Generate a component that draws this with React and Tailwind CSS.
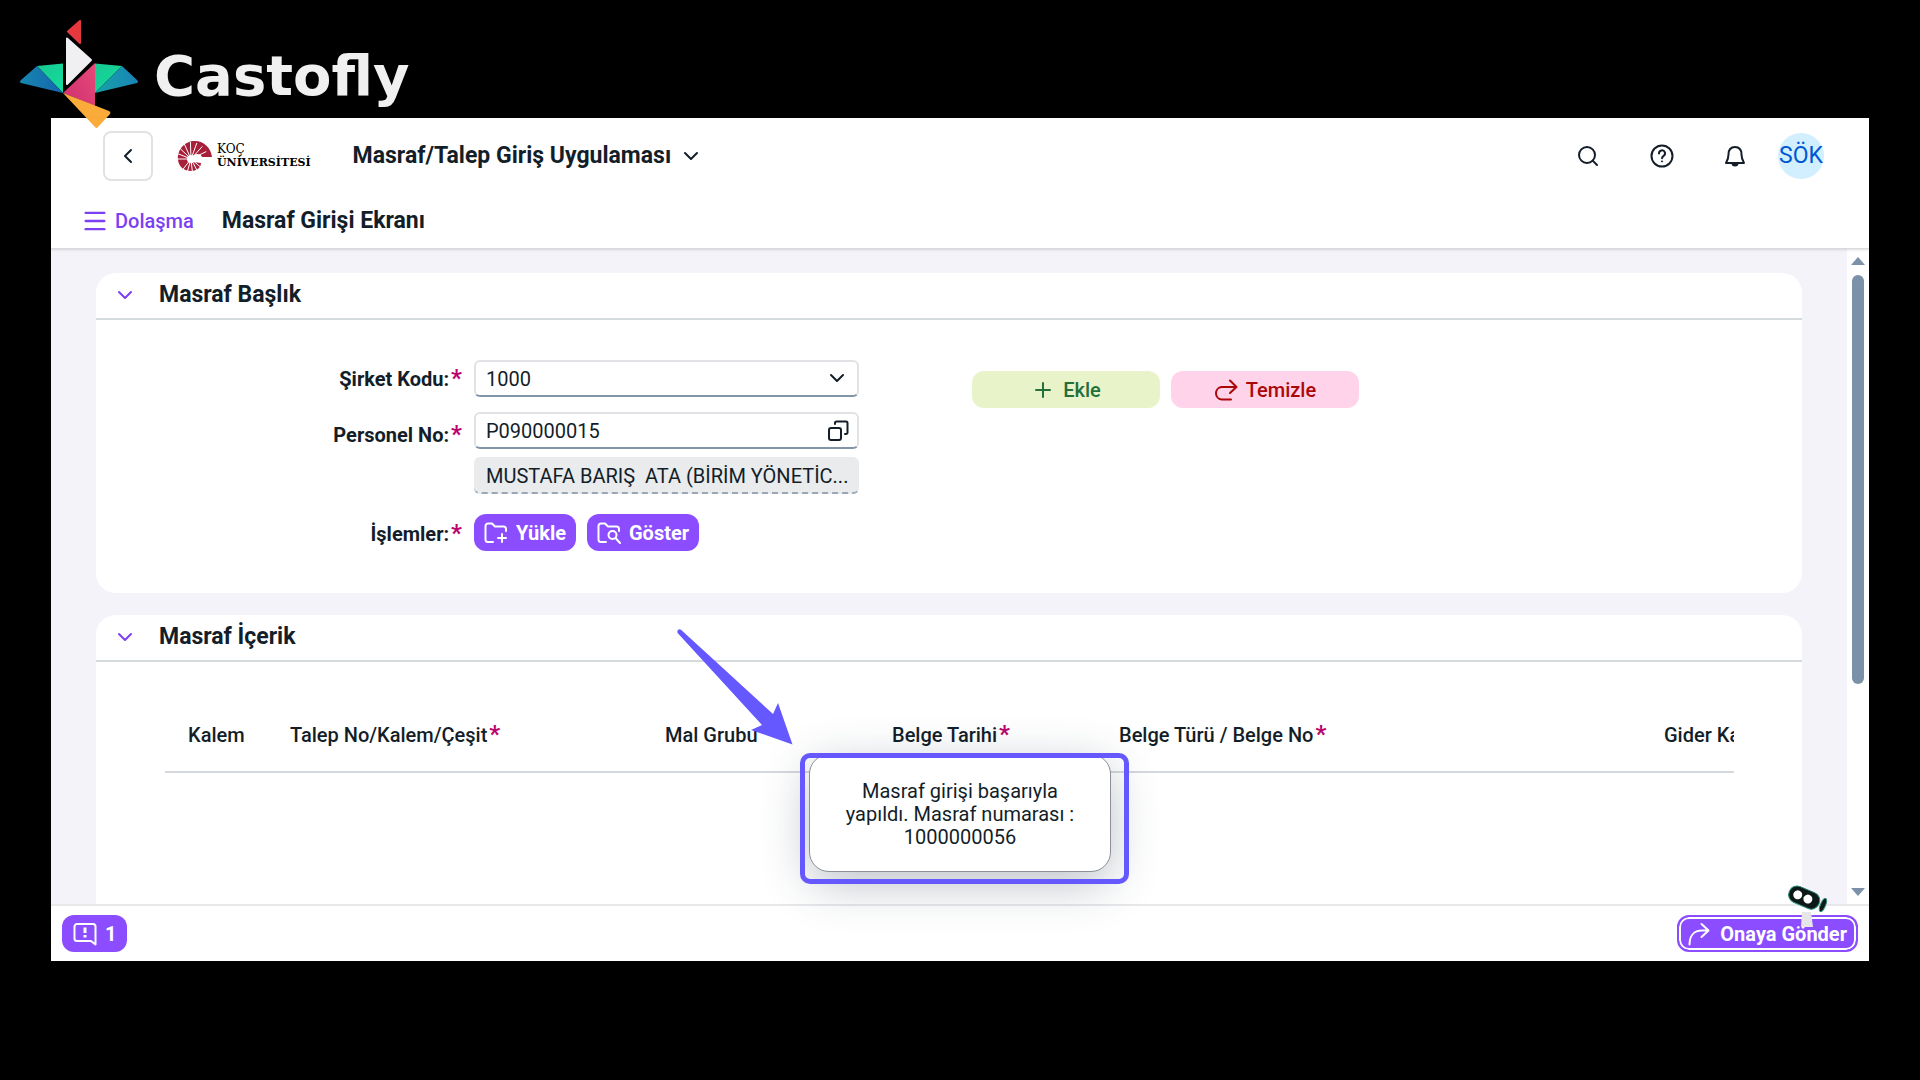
import { ChevronDown, ChevronLeft, Menu, Plus, Search } from 'lucide-react';

const columns = [
  { title: 'Kalem', className: 'w-[125px] pl-[23px]' },
  { title: 'Talep No/Kalem/Çeşit', required: true, className: 'w-[375px]' },
  { title: 'Mal Grubu', className: 'w-[227px]' },
  { title: 'Belge Tarihi', required: true, className: 'w-[227px]' },
  { title: 'Belge Türü / Belge No', required: true, className: '' },
  { title: 'Gider Ka', className: 'w-[70px]' },
];

const shellRays = Array.from({ length: 15 }, (_, i) => {
  const angle = (i * 22 * Math.PI) / 180;
  return { x: 14 - 17 * Math.cos(angle), y: 18 - 17 * Math.sin(angle) };
});

function CastoflyLogo() {
  return (
    <div className="absolute left-5 top-5 flex items-start">
      <svg viewBox="0 0 118 108" className="h-[108px] w-[118px]" aria-hidden="true">
        <defs>
          <linearGradient id="wingTop" x1="0" y1="0" x2="1" y2="1">
            <stop offset="0" stopColor="#17c98f" />
            <stop offset="1" stopColor="#15dca0" />
          </linearGradient>
          <linearGradient id="wingLow" x1="0" y1="0" x2="1" y2="0">
            <stop offset="0" stopColor="#1787b0" />
            <stop offset="1" stopColor="#1464ad" />
          </linearGradient>
          <linearGradient id="wingLowRight" x1="0" y1="0" x2="1" y2="0">
            <stop offset="0" stopColor="#16a3a6" />
            <stop offset="1" stopColor="#1983b8" />
          </linearGradient>
          <linearGradient id="chest" x1="1" y1="0" x2="0" y2="1">
            <stop offset="0" stopColor="#ea4a78" />
            <stop offset="1" stopColor="#cb2f70" />
          </linearGradient>
        </defs>
        <g strokeLinejoin="round" strokeWidth="2">
          <path d="M48 11.5 60 1v22z" fill="#e6393f" stroke="#e6393f" />
          <path d="M47 18.5v45.5l24-24z" fill="#f0f0f2" stroke="#f0f0f2" />
        </g>
        <path d="M17 46 43 43.5v29.5z" fill="url(#wingTop)" />
        <path d="M17 46 43 73 1 63Q-1 62 1 60z" fill="url(#wingLow)" />
        <path d="M75 43.5l27 2.5-27 27z" fill="url(#wingTop)" />
        <path d="M102 46l15 14q2 2 0 3L75 73z" fill="url(#wingLowRight)" />
        <path d="M75 43v43L43 73z" fill="url(#chest)" />
        <path d="M43 73 89 91q2 1 1 3L78 107q-2 2-3 0z" fill="#fbab3a" />
      </svg>
      <span className="ml-4 mt-6 font-['DejaVu_Sans'] text-[56px] font-bold leading-[64px] text-[#f0f0f0]">
        Castofly
      </span>
    </div>
  );
}

function UniversityLogo() {
  return (
    <a href="#home" className="ml-6 flex items-center gap-1 text-black">
      <svg viewBox="0 0 36 30" className="h-[30px] w-9" aria-hidden="true">
        <path
          d="M1 19C0 8 8 0 18 0c9 0 16 7 17 16H25c-1-3-5-4-8-2-3 3-2 6-1 7l8 1c0 5-5 8-10 8C7 30 2 26 1 19z"
          fill="#a81f3a"
        />
        <circle cx="14" cy="18" r="4" fill="#fff" />
        <g stroke="#fff" strokeWidth="1">
          {shellRays.map((ray, i) => (
            <line key={i} x1="14" y1="18" x2={ray.x} y2={ray.y} />
          ))}
        </g>
      </svg>
      <span className="font-['DejaVu_Serif'] text-[12px] leading-[13px]">
        KOÇ
        <br />
        <span className="text-[11px] font-bold">ÜNİVERSİTESİ</span>
      </span>
    </a>
  );
}

function HelpIcon() {
  return (
    <svg viewBox="0 0 24 24" className="size-6" fill="none" stroke="currentColor" strokeWidth="2">
      <circle cx="12" cy="12" r="10.5" />
      <path d="M9 9.5a3 3 0 1 1 4.6 2.4c-1 .7-1.6 1-1.6 2.4" strokeLinecap="round" />
      <circle cx="12" cy="17.4" r=".6" fill="currentColor" strokeWidth="1" />
    </svg>
  );
}

function BellIcon() {
  return (
    <svg viewBox="0 0 22 24" className="h-6 w-[22px]" fill="none" stroke="currentColor" strokeWidth="2">
      <path
        d="M4.5 10.5C4.5 6 6.5 3 11 3s6.5 3 6.5 7.5c0 3.5.8 5.5 2.5 8.5H2c1.7-3 2.5-5 2.5-8.5z"
        strokeLinejoin="round"
      />
      <path d="M7.5 19.5h7a3.5 3 0 0 1-7 0z" fill="currentColor" stroke="none" />
    </svg>
  );
}

function FolderIcon({ children }) {
  return (
    <svg
      viewBox="0 0 24 22"
      className="h-[22px] w-6"
      fill="none"
      stroke="currentColor"
      strokeWidth="2"
      strokeLinecap="round"
      strokeLinejoin="round"
    >
      <path d="M9 20H4a2.5 2.5 0 0 1-2.5-2.5V4A2.5 2.5 0 0 1 4 1.5h4l3 3h8.500A2.5 2.5 0 0 1 22 7v2" />
      {children}
    </svg>
  );
}

function ValueHelpIcon() {
  return (
    <svg
      viewBox="0 0 22 22"
      className="size-[22px]"
      fill="none"
      stroke="currentColor"
      strokeWidth="2"
      strokeLinecap="round"
      strokeLinejoin="round"
    >
      <rect x="2" y="8" width="12" height="12" rx="2" />
      <path d="M8 4V3a1.5 1.5 0 0 1 1.5-1.5H19A1.5 1.5 0 0 1 20.5 3v9.500A1.5 1.5 0 0 1 19 14h-1" />
    </svg>
  );
}

function MessageIcon() {
  return (
    <svg
      viewBox="0 0 24 24"
      className="size-6"
      fill="none"
      stroke="currentColor"
      strokeWidth="2"
      strokeLinejoin="round"
    >
      <path d="M22.5 22.5v-18A2.5 2.5 0 0 0 20 2H4a2.5 2.5 0 0 0-2.5 2.5v12A2.5 2.5 0 0 0 4 19h14z" />
      <path d="M12 5.5v5.5M12 13v2.5" strokeWidth="3" />
    </svg>
  );
}

// the assistant robot that floats over the footer action
function Assistant() {
  return (
    <svg
      viewBox="0 0 42 44"
      className="pointer-events-none absolute bottom-[33px] right-10 h-11 w-[42px]"
      aria-hidden="true"
    >
      <path d="M15 28h9l2 15H14z" fill="#e6e6e9" />
      <g transform="rotate(23 17 14)">
        <rect x="1" y="5" width="32" height="17" rx="8" fill="#0c1916" stroke="#2a8a78" />
        <circle cx="10" cy="13.5" r="4.5" fill="#fff" />
        <circle cx="21" cy="13.5" r="4.5" fill="#fff" />
      </g>
      <ellipse cx="36" cy="21" rx="2.5" ry="7" transform="rotate(23 36 21)" fill="#0c1916" stroke="#2a8a78" />
    </svg>
  );
}

function Required() {
  return <span className="ml-0.5 text-[24px] font-bold leading-none text-[#ba066c]">*</span>;
}

function Section({ title, className, children }) {
  return (
    <section className={className}>
      <div className="flex h-[47px] items-center border-b-2 border-[#d5dadd] pb-0.5 pl-[17px]">
        <button type="button" aria-label={title} className="text-[#7c3ff2]">
          <ChevronDown className="size-6" />
        </button>
        <h2 className="ml-[22px] text-[23px] font-bold leading-7">{title}</h2>
      </div>
      {children}
    </section>
  );
}

export default function App() {
  return (
    <div className="relative flex h-screen min-h-[900px] flex-col bg-black px-[51px] pb-[119px] pt-[118px] font-['Roboto',sans-serif] text-[20px] leading-6 text-[#131e29]">
      <div className="relative flex min-h-0 flex-1 flex-col bg-white">
        <header className="relative z-10 shrink-0 border-b border-[#d9d9de] shadow-sm">
          <div className="flex h-[76px] items-center pl-[52px] pr-[45px]">
            <button
              type="button"
              aria-label="Geri"
              className="flex size-[50px] items-center justify-center rounded-lg border-2 border-[#e2e2e4]"
            >
              <ChevronLeft className="size-6" />
            </button>
            <UniversityLogo />
            <button type="button" className="ml-[42px] flex items-center gap-2 text-[23px] font-bold leading-7">
              Masraf/Talep Giriş Uygulaması
              <ChevronDown className="size-6" />
            </button>
            <div className="ml-auto flex items-center gap-[50px]">
              <button type="button" aria-label="Ara">
                <Search className="size-6" />
              </button>
              <button type="button" aria-label="Yardım">
                <HelpIcon />
              </button>
              <button type="button" aria-label="Bildirimler">
                <BellIcon />
              </button>
              <button
                type="button"
                className="-ml-[18px] flex size-[46px] items-center justify-center rounded-full bg-[#d1efff] text-[23px] text-[#0057d2]"
              >
                SÖK
              </button>
            </div>
          </div>
          <div className="flex h-[54px] items-center pl-[30px]">
            <button type="button" className="flex items-center gap-1.5 font-medium text-[#7c3ff2]">
              <Menu className="size-7" />
              Dolaşma
            </button>
            <h1 className="ml-7 text-[23px] font-bold leading-7">Masraf Girişi Ekranı</h1>
          </div>
        </header>

        <div className="flex min-h-0 flex-1">
          <main className="flex min-w-0 flex-1 flex-col gap-[22px] overflow-hidden bg-[#f5f3fa] pl-[45px] pr-[45px] pt-6">
            <Section title="Masraf Başlık" className="shrink-0 rounded-[20px] bg-white">
              <form className="grid grid-cols-[378fr_385fr_943fr] pb-[42px] pt-10">
                <label htmlFor="company" className="py-1.5 pr-3 text-right font-bold">
                  Şirket Kodu:
                  <Required />
                </label>
                <div className="relative">
                  <select
                    id="company"
                    className="h-[37px] w-full appearance-none rounded-md border-2 border-[#e0e2e5] border-b-[#8396a8] bg-white px-2.5"
                  >
                    <option>1000</option>
                  </select>
                  <ChevronDown className="pointer-events-none absolute right-2.5 top-1.5 size-6" />
                </div>
                <div className="flex gap-[11px] pl-[113px] pt-[11px]">
                  <button
                    type="button"
                    className="flex h-[37px] w-[188px] items-center justify-center gap-2 rounded-xl bg-[#e8f3c9] font-medium text-[#256f3a]"
                  >
                    <Plus className="size-6" />
                    Ekle
                  </button>
                  <button
                    type="button"
                    className="flex h-[37px] w-[188px] items-center justify-center gap-2 rounded-xl bg-[#ffd3e9] font-medium text-[#aa0808]"
                  >
                    <svg
                      viewBox="0 0 24 22"
                      className="h-[22px] w-6"
                      fill="none"
                      stroke="currentColor"
                      strokeWidth="2"
                      strokeLinecap="round"
                      strokeLinejoin="round"
                    >
                      <path d="M16 1.5 22.5 8 16 14M22 8H7.500a6.3 6.3 0 0 0 0 12.5H17" />
                    </svg>
                    Temizle
                  </button>
                </div>

                <label htmlFor="personnel" className="col-start-1 pr-3 pt-3.5 text-right font-bold">
                  Personel No:
                  <Required />
                </label>
                <div className="flex min-w-0 flex-col gap-2 pt-1">
                  <div className="relative">
                    <input
                      id="personnel"
                      defaultValue="P090000015"
                      className="h-[37px] w-full rounded-md border-2 border-[#e0e2e5] border-b-[#8396a8] bg-white px-2.5"
                    />
                    <button type="button" aria-label="Personel seç" className="absolute right-2.5 top-2">
                      <ValueHelpIcon />
                    </button>
                  </div>
                  <div className="h-[37px] overflow-hidden whitespace-pre rounded-md border-b-2 border-dashed border-[#9aa8b6] bg-[#e9ebed] px-3 pt-[7px]">
                    {'MUSTAFA BARIŞ  ATA (BİRİM YÖNETİC...'}
                  </div>
                </div>

                <div className="col-start-1 pr-3 pt-[27px] text-right font-bold">
                  İşlemler:
                  <Required />
                </div>
                <div className="flex gap-[11px] pt-5">
                  <button
                    type="button"
                    className="flex h-[37px] items-center gap-2 rounded-xl bg-[#8b4dff] px-2.5 font-bold text-white"
                  >
                    <FolderIcon>
                      <path d="M18 12v8M14 16h8" />
                    </FolderIcon>
                    Yükle
                  </button>
                  <button
                    type="button"
                    className="flex h-[37px] items-center gap-2 rounded-xl bg-[#8b4dff] px-2.5 font-bold text-white"
                  >
                    <FolderIcon>
                      <circle cx="15.5" cy="13" r="4" />
                      <path d="m18.5 16 4.5 5" />
                    </FolderIcon>
                    Göster
                  </button>
                </div>
              </form>
            </Section>

            <Section title="Masraf İçerik" className="min-h-0 flex-1 rounded-t-[20px] bg-white">
              <div className="ml-[69px] mr-[68px] overflow-hidden pt-9">
                <table className="w-full table-fixed">
                  <thead>
                    <tr className="h-[74px] border-b-2 border-[#d5d8dc]">
                      {columns.map((column) => (
                        <th
                          key={column.title}
                          className={`whitespace-nowrap text-left font-medium ${column.className}`}
                        >
                          {column.title}
                          {column.required && <Required />}
                        </th>
                      ))}
                    </tr>
                  </thead>
                </table>
              </div>
            </Section>
          </main>

          <div className="flex w-[22px] flex-col items-center justify-between bg-white py-2">
            <svg viewBox="0 0 14 8" className="h-2 w-3.5" fill="#7b91a8">
              <path d="M7 0l7 8H0z" />
            </svg>
            <div className="mb-auto mt-2.5 h-[64%] w-3 rounded-full bg-[#7b91a8]" />
            <svg viewBox="0 0 14 8" className="h-2 w-3.5" fill="#7b91a8">
              <path d="M7 8l7-8H0z" />
            </svg>
          </div>
        </div>

        <footer className="flex h-[57px] shrink-0 items-center justify-between border-t-2 border-[#e8e8eb] px-[11px]">
          <button
            type="button"
            className="flex h-[37px] items-center gap-2 rounded-xl bg-[#8b4dff] px-[11px] font-bold text-white"
          >
            <MessageIcon />1
          </button>
          <button
            type="button"
            className="flex h-[37px] items-center gap-2.5 rounded-xl border-2 border-[#8b4dff] bg-[#8b4dff] px-[9px] font-bold text-white ring-2 ring-inset ring-white"
          >
            <svg
              viewBox="0 0 22 24"
              className="h-6 w-[22px]"
              fill="none"
              stroke="currentColor"
              strokeWidth="2"
              strokeLinecap="round"
              strokeLinejoin="round"
            >
              <path d="M1.5 22.5C1.5 14 6 8.5 14 8.5h6.5M13.5 2l7 6.5-7 6.5" />
            </svg>
            Onaya Gönder
          </button>
        </footer>

        <Assistant />

        <div
          role="status"
          className="absolute bottom-[89px] left-1/2 h-[118px] w-[302px] -translate-x-1/2 rounded-[20px] border border-[#8c8e98] bg-white px-8 pt-[25px] text-center leading-[23px] shadow-[0_12px_48px_rgba(34,53,72,0.3)]"
        >
          Masraf girişi başarıyla yapıldı. Masraf numarası : 1000000056
        </div>
        <div className="absolute bottom-[77px] left-1/2 h-[131px] w-[329px] -translate-x-40 rounded-[10px] border-5 border-[#6558ff]" />
        <svg
          viewBox="0 0 116 116"
          className="absolute bottom-[216px] left-1/2 size-[116px] -translate-x-[283px]"
          fill="#6558ff"
          aria-hidden="true"
        >
          <path d="M4 .8 96 85l5-11 14.5 41.5L74 101l11-5L.6 4C-.5 1.5 2 -.8 4 .8z" />
        </svg>
      </div>
      <CastoflyLogo />
    </div>
  );
}
